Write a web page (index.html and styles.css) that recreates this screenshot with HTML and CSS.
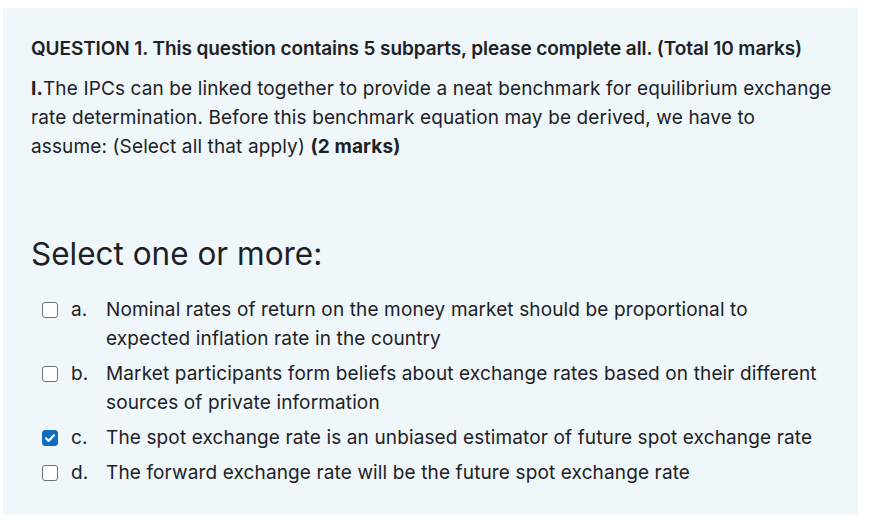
FILE: index.html
```html
<!DOCTYPE html>
<html>
<head>
<meta charset="utf-8">
<link rel="stylesheet" href="styles.css">
</head>
<body>
<div class="panel">
  <div class="qtext">
    <p class="title">QUESTION 1. This question contains 5 subparts, please complete all. (Total 10 marks)</p>
    <p class="body"><b>I.</b>The IPCs can be linked together to provide a neat benchmark for equilibrium exchange rate determination. Before this benchmark equation may be derived, we have to assume: (Select all that apply) <b>(2 marks)</b></p>
  </div>
  <div class="prompt">Select one or more:</div>
  <div class="answers">
    <div class="opt">
      <span class="box"></span>
      <span class="letter">a.</span>
      <span class="text">Nominal rates of return on the money market should be proportional to expected inflation rate in the country</span>
    </div>
    <div class="opt">
      <span class="box"></span>
      <span class="letter">b.</span>
      <span class="text">Market participants form beliefs about exchange rates based on their different sources of private information</span>
    </div>
    <div class="opt">
      <span class="box checked"><svg viewBox="0 0 16 16" width="16" height="16"><path d="M4 8.3l2.6 2.6L12 5.3" fill="none" stroke="#fff" stroke-width="2.2" stroke-linecap="round" stroke-linejoin="round"/></svg></span>
      <span class="letter">c.</span>
      <span class="text">The spot exchange rate is an unbiased estimator of future spot exchange rate</span>
    </div>
    <div class="opt">
      <span class="box"></span>
      <span class="letter">d.</span>
      <span class="text">The forward exchange rate will be the future spot exchange rate</span>
    </div>
  </div>
</div>
</body>
</html>
```
FILE: styles.css
```css
html, body {
  margin: 0;
  padding: 0;
  background: #fff;
}
body {
  font-family: Inter, "Noto Sans", sans-serif;
  color: #1d2125;
}
.panel {
  margin: 8px 0 0 3px;
  width: 855px;
  height: 507px;
  box-sizing: border-box;
  background: #eff7fb;
  padding: 27px 20px 0 28px;
}
.qtext p {
  margin: 0;
}
.title {
  font-size: 19px;
  font-weight: 600;
  line-height: 28px;
  letter-spacing: -0.09px;
  margin-bottom: 11px !important;
}
.body {
  font-size: 19px;
  line-height: 29px;
  letter-spacing: 0.13px;
  max-width: 805px;
}
.body b {
  font-weight: 700;
}
.prompt {
  font-size: 31.5px;
  line-height: 40px;
  margin-top: 73px;
  margin-bottom: 21px;
}
.answers {
  display: flex;
  flex-direction: column;
  gap: 6px;
}
.opt {
  display: flex;
  align-items: flex-start;
  font-size: 19px;
  line-height: 29px;
  letter-spacing: 0.13px;
}
.box {
  flex: none;
  width: 16px;
  height: 16px;
  box-sizing: border-box;
  border: 1.5px solid #6a737b;
  border-radius: 3px;
  background: #fff;
  margin: 7px 0 0 11px;
  display: flex;
}
.box.checked {
  background: #0f6cbf;
  border-color: #0f6cbf;
}
.box.checked svg {
  margin: -1.5px;
}
.letter {
  flex: none;
  width: 35px;
  margin-left: 13px;
}
.text {
  flex: 1;
  max-width: 722px;
}
```
